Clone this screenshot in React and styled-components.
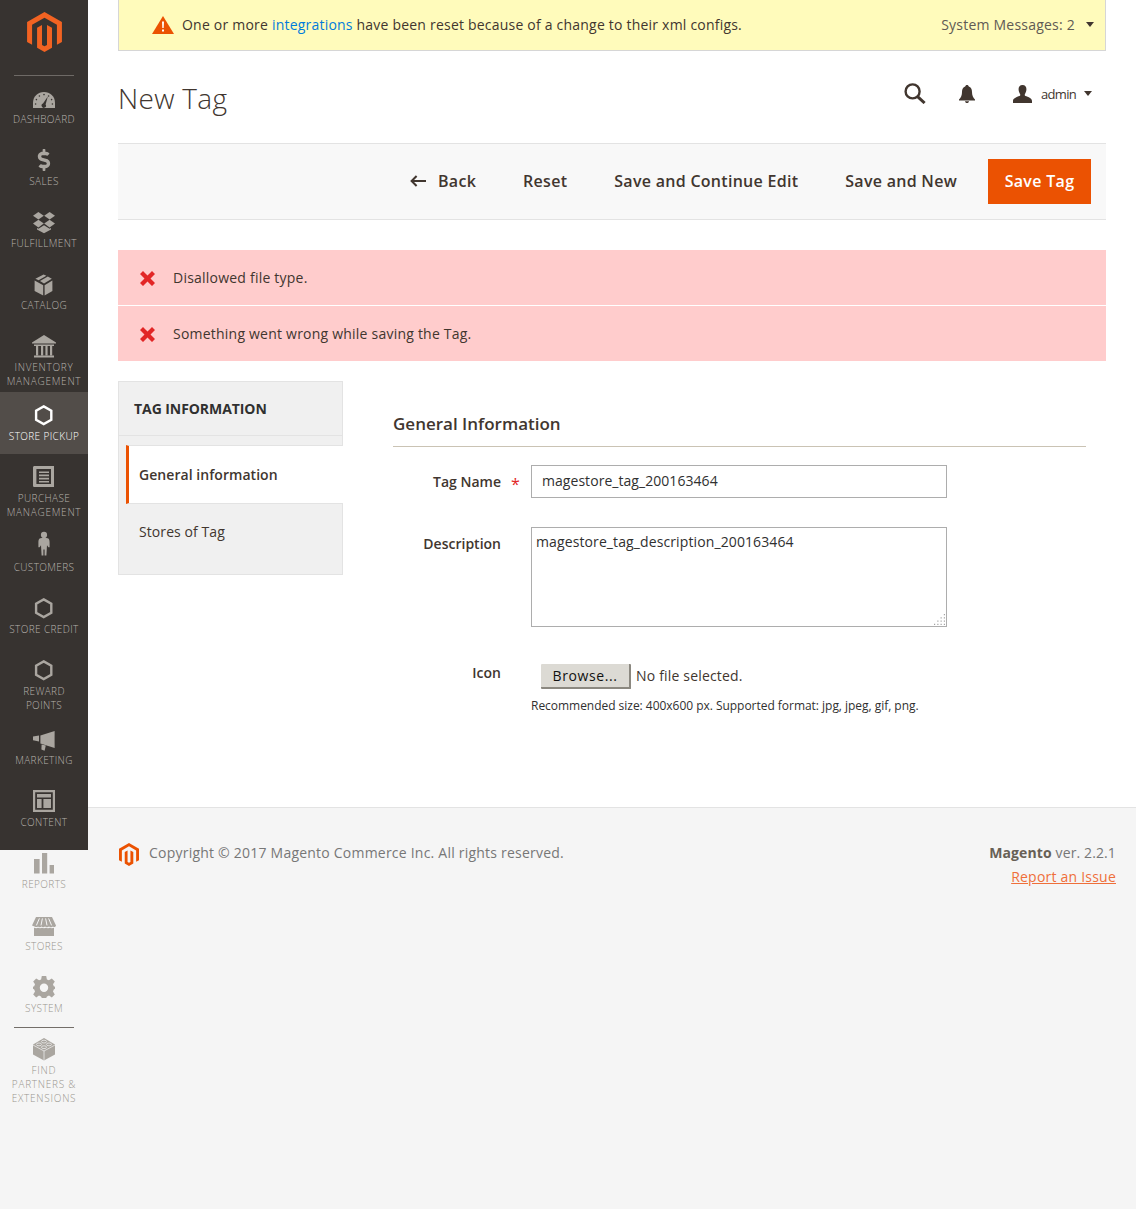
import React from 'react';
import styled, { createGlobalStyle } from 'styled-components';
import { FaDollarSign } from 'react-icons/fa';

const Global = createGlobalStyle`
  html, body { margin: 0; padding: 0; background: #f5f5f5; }
  body { font-family: "Open Sans", "Liberation Sans", sans-serif; font-size: 14px; color: #41362f; }
  * { box-sizing: border-box; }
`;

const Page = styled.div`
  display: flex;
  align-items: flex-start;
  width: 1136px;
  min-height: 1209px;
  background: #f5f5f5;
`;

const Sidebar = styled.nav`
  width: 88px;
  height: 850px;
  flex-shrink: 0;
  background: #373330;
`;

const LogoBlock = styled.div`
  height: 75px;
  padding-top: 12px;
  display: flex;
  justify-content: center;
  align-items: flex-start;
`;

const Rule = styled.div`
  height: 1px;
  width: 60px;
  margin: 0 0 0 14px;
  background: #6e6a66;
`;

const LowerRule = styled(Rule)`
  margin: 1px 0 -2px 14px;
  background: #736e69;
`;

const MenuList = styled.div`
  margin-top: -1px;
  display: flex;
  flex-direction: column;
`;

const itemColor = p => {
  if (p.$active) return '#fff';
  return p.$pale ? '#9a958f' : '#b6b2ac';
};

const MenuItem = styled.a`
  display: block;
  min-height: 62px;
  padding: 11px 0 4px;
  text-align: center;
  background: ${p => (p.$active ? '#524d49' : 'transparent')};
  color: ${itemColor};
`;

const MenuIcon = styled.div`
  width: 24px;
  height: 24px;
  margin: 0 0 2px 32px;
  display: flex;
  align-items: center;
  justify-content: center;
  svg { display: block; overflow: visible; }
`;

const MenuLabel = styled.div`
  font-size: 10px;
  font-weight: 300;
  line-height: 14px;
  text-transform: uppercase;
`;

const MenuLine = styled.div`
  letter-spacing: ${p => (p.$wide ? '0.75px' : '0.38px')};
  white-space: nowrap;
`;

const Main = styled.div`
  flex: 1;
  min-width: 0;
  display: flex;
  flex-direction: column;
  align-self: stretch;
`;

const Content = styled.div`
  background: #fff;
  height: 807px;
  padding: 0 30px;
`;

const Notice = styled.div`
  height: 51px;
  display: flex;
  align-items: center;
  padding: 0 11px 1px 33px;
  background: #fffbbb;
  border: 1px solid #d6d6d6;
  border-top: 0;
`;

const NoticeText = styled.div`
  flex: 1;
  margin-left: 8px;
  letter-spacing: 0.21px;
  color: #41362f;
`;

const NoticeLink = styled.a`
  color: #007bdb;
`;

const NoticeCount = styled.div`
  color: #605a54;
  letter-spacing: 0.22px;
  margin-right: 11px;
`;

const Caret = styled.span`
  display: block;
  width: 0;
  height: 0;
  border-left: 4px solid transparent;
  border-right: 4px solid transparent;
  border-top: 5px solid #41362f;
`;

const Header = styled.div`
  height: 92px;
  display: flex;
  align-items: center;
  padding-top: 2px;
`;

const Title = styled.h1`
  flex: 1;
  margin: 0;
  font-size: 28px;
  font-weight: 300;
  line-height: 36px;
  letter-spacing: 0.3px;
  color: #41362f;
`;

const HeaderTools = styled.div`
  display: flex;
  align-items: center;
  margin: 0 14px 9px 0;
`;

const ToolIcon = styled.div`
  display: flex;
  margin-right: ${p => p.$gap}px;
`;

const AdminName = styled.span`
  font-size: 13px;
  letter-spacing: -0.7px;
  color: #41362f;
  margin-right: 8px;
`;

const ActionBar = styled.div`
  height: 77px;
  display: flex;
  align-items: center;
  justify-content: flex-end;
  padding: 0 15px;
  background: #f8f8f8;
  border-top: 1px solid #e3e3e3;
  border-bottom: 1px solid #e3e3e3;
`;

const ActionButton = styled.a`
  display: flex;
  align-items: center;
  font-size: 16px;
  font-weight: 600;
  letter-spacing: 0.28px;
  color: #41362f;
  margin: 0 ${p => p.$gap}px 2px 0;
  white-space: nowrap;
`;

const BackArrow = styled.svg`
  margin-right: 12px;
`;

const PrimaryButton = styled.a`
  display: flex;
  align-items: center;
  justify-content: center;
  width: 103px;
  height: 45px;
  padding-bottom: 2px;
  background: #eb5202;
  color: #fff;
  font-size: 16px;
  font-weight: 600;
  letter-spacing: 0.32px;
`;

const Messages = styled.div`
  margin-top: 30px;
  display: flex;
  flex-direction: column;
  gap: 1px;
`;

const ErrorMessage = styled.div`
  height: 55px;
  display: flex;
  align-items: center;
  padding-left: 22px;
  background: #fcc;
  letter-spacing: 0.22px;
  color: #41362f;
  svg { margin-right: 18px; margin-top: 2px; }
`;

const Columns = styled.div`
  display: flex;
  margin-top: 20px;
`;

const TabsPanel = styled.div`
  width: 225px;
  height: 194px;
  flex-shrink: 0;
  background: #f0f0f0;
  border: 1px solid #e3e3e3;
`;

const TabsTitle = styled.div`
  height: 54px;
  padding-left: 15px;
  display: flex;
  align-items: center;
  font-size: 14px;
  font-weight: 700;
  letter-spacing: -0.07px;
  color: #303030;
  border-bottom: 1px solid #e3e3e3;
  margin-bottom: 9px;
`;

const ActiveTab = styled.div`
  height: 59px;
  margin-left: 7px;
  margin-right: -1px;
  padding-left: 10px;
  display: flex;
  align-items: center;
  background: #fff;
  border-left: 3px solid #eb5202;
  border-top: 1px solid #e3e3e3;
  border-bottom: 1px solid #e3e3e3;
  font-weight: 600;
  letter-spacing: 0.05px;
  color: #41362f;
`;

const PlainTab = styled.div`
  padding: 18px 0 0 20px;
  line-height: 19px;
  letter-spacing: 0.08px;
  color: #41362f;
`;

const FormArea = styled.div`
  flex: 1;
  margin: 30px 20px 0 50px;
`;

const SectionTitle = styled.h2`
  margin: 0;
  height: 36px;
  font-size: 17px;
  font-weight: 600;
  line-height: 26px;
  color: #41362f;
  border-bottom: 1px solid #cac3b4;
`;

const Field = styled.div`
  display: grid;
  grid-template-columns: 108px 30px 416px;
  margin-top: ${p => p.$top}px;
`;

const FieldLabel = styled.label`
  font-weight: 600;
  text-align: right;
  line-height: 19px;
  margin-top: ${p => p.$top}px;
  color: #41362f;
`;

const Required = styled.span`
  color: #e22626;
  font-size: 16px;
  line-height: 19px;
  padding: 10px 0 0 10px;
`;

const TextInput = styled.input`
  width: 416px;
  height: 33px;
  padding: 0 10px 2px;
  border: 1px solid #adadad;
  border-radius: 0;
  outline: 0;
  background: #fff;
  font: 14px "Open Sans", sans-serif;
  letter-spacing: 0.05px;
  color: #303030;
`;

const AreaWrap = styled.div`
  position: relative;
  width: 416px;
  height: 100px;
`;

const TextArea = styled.textarea`
  display: block;
  width: 416px;
  height: 100px;
  padding: 4px 4px;
  border: 1px solid #adadad;
  border-radius: 0;
  outline: 0;
  resize: none;
  background: #fff;
  font: 14px/19px "Open Sans", sans-serif;
  letter-spacing: 0.11px;
  color: #303030;
`;

const ResizeGrip = styled.svg`
  position: absolute;
  right: 1px;
  bottom: 1px;
`;

const FileRow = styled.div`
  display: flex;
  align-items: center;
  padding-left: 10px;
  height: 25px;
`;

const BrowseButton = styled.button`
  width: 90px;
  height: 25px;
  padding: 0;
  background: #dcdad4;
  border: 0;
  border-right: 2px solid #8b8880;
  border-bottom: 2px solid #8b8880;
  border-radius: 1px;
  font: 14px "Open Sans", sans-serif;
  letter-spacing: 0.6px;
  color: #111;
`;

const NoFile = styled.span`
  margin: 0 0 2px 5px;
  letter-spacing: 0.18px;
  color: #41362f;
`;

const Hint = styled.div`
  margin-top: 8px;
  font-size: 12px;
  line-height: 18px;
  letter-spacing: -0.03px;
  color: #303030;
`;

const Footer = styled.footer`
  flex: 1;
  display: flex;
  justify-content: space-between;
  padding: 35px 20px 0 30px;
  background: #f5f5f5;
  border-top: 1px solid #e3e3e3;
  color: #777;
`;

const Copyright = styled.div`
  display: flex;
  align-items: flex-start;
  line-height: 19px;
  letter-spacing: 0.22px;
  svg { margin: 0 10px 0 1px; }
`;

const Version = styled.div`
  text-align: right;
  line-height: 24px;
  margin-top: -2px;
  letter-spacing: 0.12px;
`;

const VersionName = styled.strong`
  font-weight: 700;
  color: #676056;
`;

const IssueLink = styled.a`
  display: block;
  color: #ef6f3a;
  letter-spacing: 0.22px;
  text-decoration: underline;
`;

const Mark = ({ w, h, color }) => (
  <svg width={w} height={h} viewBox="0 0 43.2 49.6" fill={color}>
    <path d="M21.6 0 43.2 12.4V37.1L37 40.7V15.9L21.6 7.1 6.2 15.9V40.7L0 37.1V12.4Z" />
    <path d="M24.7 16V40.8L21.6 42.6 18.5 40.8V16L12.4 19.6V44.4L21.6 49.6 30.9 44.4V19.6Z" />
  </svg>
);

const G = ({ children }) => (
  <svg width="24" height="24" viewBox="0 0 24 24" fill="#aaa6a0">{children}</svg>
);

const Hex = ({ color }) => (
  <svg width="24" height="24" viewBox="0 0 24 24" fill="none" stroke={color || '#aaa6a0'} strokeWidth="2.4">
    <path d="M11.7 3.4 19.3 7.7V16.8L11.7 21.1 4.1 16.8V7.7Z" />
  </svg>
);

const bg = '#373330';
const pale = '#f5f5f5';

const icons = {
  dashboard: (
    <G>
      <path d="M1 22V17C1 10 6 6 12 6s11 4 11 11v5Z" />
      <g fill={bg}>
        <circle cx="12" cy="8.6" r=".8" /><circle cx="7.4" cy="10" r=".8" /><circle cx="16.6" cy="10" r=".8" />
        <circle cx="4.4" cy="13.6" r=".8" /><circle cx="19.6" cy="13.6" r=".8" /><circle cx="3.6" cy="18" r=".8" /><circle cx="20.4" cy="18" r=".8" />
        <path d="M15.8 10.6 13.6 18.4a2.2 2.2 0 1 1-2.6-.8Z" />
      </g>
    </G>
  ),
  sales: <FaDollarSign size={22} color="#aaa6a0" />,
  fulfillment: (
    <G>
      <path d="M6.4 2 11.8 5.8 6.4 9.6 1 5.8Z" />
      <path d="M17.6 2 23 5.8 17.6 9.6 12.2 5.8Z" />
      <path d="M6.4 9.8 11.8 13.6 6.4 17.4 1 13.6Z" />
      <path d="M17.6 9.8 23 13.6 17.6 17.4 12.2 13.6Z" />
      <path d="M5 18 6.4 18.8 12 15.2 17.6 18.8 19 18V19.4L12 23.2 5 19.4Z" />
    </G>
  ),
  catalog: (
    <G>
      <path d="M2.6 8.6 11.2 13.2V23.6L2.6 19Z" />
      <path d="M20.4 8.6V19L12.6 23.6V13.2Z" />
      <path d="M11.6 2.4 14.4 3.8 6.6 8.2 3.4 6.8Z" />
      <path d="M15.8 4.5 19.8 6.8 12 11.6 8 9Z" />
    </G>
  ),
  inventory: (
    <G>
      <path d="M12 1 24 8.4V9.6H0V8.4Z" />
      <path d="M2 10.6H22V12H2ZM2 21.4H22V23.4H2Z" />
      <path d="M4 12H6.2V21.4H4ZM9 12H11.2V21.4H9ZM13.4 12H15.6V21.4H13.4ZM18 12H20.2V21.4H18Z" />
    </G>
  ),
  purchase: (
    <G>
      <path fillRule="evenodd" d="M2.6 1H22V22H2.6C1.6 22 1 21.4 1 20.4V2.6C1 1.6 1.6 1 2.6 1ZM4.4 4V19H19V4Z" />
      <path d="M7 6.4H17V8H7ZM7 9.6H17V11.2H7ZM7 12.8H17V14.4H7ZM7 16H17V17.4H7Z" />
    </G>
  ),
  customers: (
    <G>
      <circle cx="12" cy=".9" r="3.1" />
      <path transform="translate(0 -1.4)" d="M8 5.6C9 5.2 15 5.2 16 5.6 17.4 6.4 17.6 8 17.6 10V14.6H16.4L15 12.6 14.4 23H12.6V17H11.4V23H9.6L9 12.6 7.6 14.6H6.4V10C6.4 8 6.6 6.4 8 5.6Z" />
    </G>
  ),
  credit: <Hex />,
  pickup: <Hex color="#fff" />,
  marketing: (
    <G>
      <path d="M8.4 8.4 22.6 4V21L8.4 16.6Z" />
      <path d="M1 9.4 7 8.4V14.4L1 13.2Z" />
      <path d="M9.6 17.4 13.8 18.6 12.6 23.8 9.4 22.6Z" />
    </G>
  ),
  content: (
    <G>
      <path fillRule="evenodd" d="M1 1H23V23H1ZM3.2 3.2V20.8H20.8V3.2Z" />
      <path d="M5 5H19V8.4H5ZM5 10H9.6V19H5ZM11.4 10H19V19H11.4Z" />
    </G>
  ),
  reports: (
    <G>
      <path d="M2 8H7.6V22.4H2ZM10 2H15.2V22.4H10ZM17.6 14H22V22.4H17.6Z" />
    </G>
  ),
  stores: (
    <G>
      <g transform="translate(0 3.4)">
        <path d="M4 .6H20L24 9C24 10.4 22 11 21 10 20 11 18 11 17 10 16 11 14 11 13 10 12 11 10.4 11 9.6 10 8.6 11 6.8 11 6 10 5 11 2.6 10.4 0 9Z" />
        <path d="M2 11.4C3.6 12 5 12 6 11.4 7 12 9 12 10 11.4 11 12 13 12 14 11.4 15 12 17 12 18 11.4 19 12 20.6 12 22 11.4V19.6H2Z" />
        <path stroke={pale} strokeWidth="1" fill="none" d="M7.4 2 4.4 9M10.4 2 9 9M13.6 2 15 9M16.6 2 19.6 9" />
      </g>
    </G>
  ),
  system: (
    <G>
      <path fillRule="evenodd" d="M9.8 1H14.2L14.9 4.4 16.9 5.2 19.8 3.4 22.8 6.4 21 9.2 21.8 11.2 23 11.8V13.8L21.8 14.6 21 16.6 22.8 19.4 19.8 22.4 17 20.6 15 21.4 14.2 23H9.8L9 21.4 7 20.6 4.2 22.4 1.2 19.4 3 16.6 2.2 14.6 1 13.8V11.8L2.2 11.2 3 9.2 1.2 6.4 4.2 3.4 7.1 5.2 9.1 4.4ZM12 8.6A4.2 4.2 0 1 0 12 17 4.2 4.2 0 1 0 12 8.6Z" />
    </G>
  ),
  partners: (
    <G>
      <path d="M12 1 23 7.4V17.4L12 23.4 1 17.4V7.4Z" />
      <g stroke={pale} strokeWidth=".7" fill="none">
        <path d="M1 8 12 14 23 8M12 14V23.4" />
        <ellipse cx="12" cy="4.6" rx="2.6" ry="1.4" />
        <ellipse cx="7" cy="7.4" rx="2.6" ry="1.4" />
        <ellipse cx="17" cy="7.4" rx="2.6" ry="1.4" />
        <ellipse cx="12" cy="10.2" rx="2.6" ry="1.4" />
      </g>
    </G>
  ),
};

const menu = [
  { icon: 'dashboard', lines: ['Dashboard'] },
  { icon: 'sales', lines: ['Sales'] },
  { icon: 'fulfillment', lines: ['Fulfillment'] },
  { icon: 'catalog', lines: ['Catalog'] },
  { icon: 'inventory', lines: ['Inventory', 'Management'] },
  { icon: 'pickup', lines: ['Store Pickup'], active: true },
  { icon: 'purchase', lines: ['Purchase', 'Management'] },
  { icon: 'customers', lines: ['Customers'] },
  { icon: 'credit', lines: ['Store Credit'] },
  { icon: 'credit', lines: ['Reward', 'Points'] },
  { icon: 'marketing', lines: ['Marketing'] },
  { icon: 'content', lines: ['Content'] },
  { icon: 'reports', lines: ['Reports'], pale: true },
  { icon: 'stores', lines: ['Stores'], pale: true },
  { icon: 'system', lines: ['System'], pale: true },
];

const WIDE = ['Inventory', 'Management', 'Find', 'Partners &', 'Extensions'];

const Item = ({ icon, lines, active, pale: onPale }) => (
  <MenuItem $active={active} $pale={onPale}>
    <MenuIcon>{icons[icon]}</MenuIcon>
    <MenuLabel>
      {lines.map(l => <MenuLine key={l} $wide={WIDE.includes(l)}>{l}</MenuLine>)}
    </MenuLabel>
  </MenuItem>
);

const Cross = () => (
  <svg width="15" height="15" viewBox="0 0 15 15" fill="#e22626">
    <path d="M3 0 7.5 4.5 12 0 15 3 10.5 7.5 15 12 12 15 7.5 10.5 3 15 0 12 4.5 7.5 0 3Z" />
  </svg>
);

export default function App() {
  return (
    <>
      <Global />
      <Page>
        <Sidebar>
          <LogoBlock><Mark w={35} h={40} color="#f26322" /></LogoBlock>
          <Rule />
          <MenuList>
            {menu.map(m => <Item key={m.lines[0]} {...m} />)}
            <LowerRule />
            <Item icon="partners" lines={['Find', 'Partners &', 'Extensions']} pale />
          </MenuList>
        </Sidebar>
        <Main>
          <Content>
            <Notice>
              <svg width="22" height="18" viewBox="0 0 22 18">
                <path d="M11 0 22 18H0Z" fill="#eb5202" />
                <path d="M10 5.5H12L11.7 12H10.3ZM10 13.4H12V15.4H10Z" fill="#fff" />
              </svg>
              <NoticeText>
                One or more <NoticeLink>integrations</NoticeLink> have been reset because of a change to their xml configs.
              </NoticeText>
              <NoticeCount>System Messages: 2</NoticeCount>
              <Caret />
            </Notice>
            <Header>
              <Title>New Tag</Title>
              <HeaderTools>
                <ToolIcon $gap={33}>
                  <svg width="22" height="21" viewBox="0 0 22 21" fill="none" stroke="#41362f">
                    <circle cx="8.6" cy="8.4" r="7" strokeWidth="2.4" />
                    <path d="M13.6 13.6 20.6 20" strokeWidth="3" />
                  </svg>
                </ToolIcon>
                <ToolIcon $gap={38}>
                  <svg width="16" height="18" viewBox="0 0 16 18" fill="#41362f">
                    <path d="M8 0C9 0 9.6.6 9.8 1.6 12 2.4 13 4.4 13 7 13 10 14 12.6 16 14.6V15.4H0V14.6C2 12.6 3 10 3 7 3 4.4 4 2.4 6.2 1.6 6.4.6 7 0 8 0Z" />
                    <path d="M6 16.2H10C10 17.4 9 18 8 18S6 17.4 6 16.2Z" />
                  </svg>
                </ToolIcon>
                <ToolIcon $gap={9}>
                  <svg width="19" height="18" viewBox="0 0 19 18" fill="#41362f">
                    <path d="M9.5 0C12.4 0 13.6 2 13.4 4.6 13.3 6.6 12.6 8 11.8 9.2V10.6C13 11.6 19 12.6 19 16V18H0V16C0 12.6 6 11.6 7.2 10.6V9.2C6.4 8 5.7 6.6 5.6 4.6 5.4 2 6.6 0 9.5 0Z" />
                  </svg>
                </ToolIcon>
                <AdminName>admin</AdminName>
                <Caret />
              </HeaderTools>
            </Header>
            <ActionBar>
              <ActionButton $gap={47}>
                <BackArrow width="16" height="12" viewBox="0 0 16 12" fill="none" stroke="#41362f" strokeWidth="2">
                  <path d="M16 6H2M6.6 1 1.6 6l5 5" />
                </BackArrow>
                Back
              </ActionButton>
              <ActionButton $gap={47}>Reset</ActionButton>
              <ActionButton $gap={47}>Save and Continue Edit</ActionButton>
              <ActionButton $gap={31}>Save and New</ActionButton>
              <PrimaryButton>Save Tag</PrimaryButton>
            </ActionBar>
            <Messages>
              <ErrorMessage><Cross />Disallowed file type.</ErrorMessage>
              <ErrorMessage><Cross />Something went wrong while saving the Tag.</ErrorMessage>
            </Messages>
            <Columns>
              <TabsPanel>
                <TabsTitle>TAG INFORMATION</TabsTitle>
                <ActiveTab>General information</ActiveTab>
                <PlainTab>Stores of Tag</PlainTab>
              </TabsPanel>
              <FormArea>
                <SectionTitle>General Information</SectionTitle>
                <Field $top={18}>
                  <FieldLabel $top={7}>Tag Name</FieldLabel>
                  <Required>*</Required>
                  <TextInput readOnly value="magestore_tag_200163464" />
                </Field>
                <Field $top={29}>
                  <FieldLabel $top={7}>Description</FieldLabel>
                  <span />
                  <AreaWrap>
                    <TextArea readOnly value="magestore_tag_description_200163464" />
                    <ResizeGrip width="13" height="13" viewBox="0 0 12 12" fill="#9c9c9c">
                      <path d="M10 1h1v1h-1zM10 4h1v1h-1zM7 4h1v1H7zM10 7h1v1h-1zM7 7h1v1H7zM4 7h1v1H4zM10 10h1v1h-1zM7 10h1v1H7zM4 10h1v1H4zM1 10h1v1H1z" />
                    </ResizeGrip>
                  </AreaWrap>
                </Field>
                <Field $top={37}>
                  <FieldLabel $top={-1}>Icon</FieldLabel>
                  <span />
                  <div>
                    <FileRow>
                      <BrowseButton>Browse...</BrowseButton>
                      <NoFile>No file selected.</NoFile>
                    </FileRow>
                    <Hint>Recommended size: 400x600 px. Supported format: jpg, jpeg, gif, png.</Hint>
                  </div>
                </Field>
              </FormArea>
            </Columns>
          </Content>
          <Footer>
            <Copyright>
              <Mark w={20} h={23} color="#eb5202" />
              Copyright © 2017 Magento Commerce Inc. All rights reserved.
            </Copyright>
            <Version>
              <div><VersionName>Magento</VersionName> ver. 2.2.1</div>
              <IssueLink>Report an Issue</IssueLink>
            </Version>
          </Footer>
        </Main>
      </Page>
    </>
  );
}
